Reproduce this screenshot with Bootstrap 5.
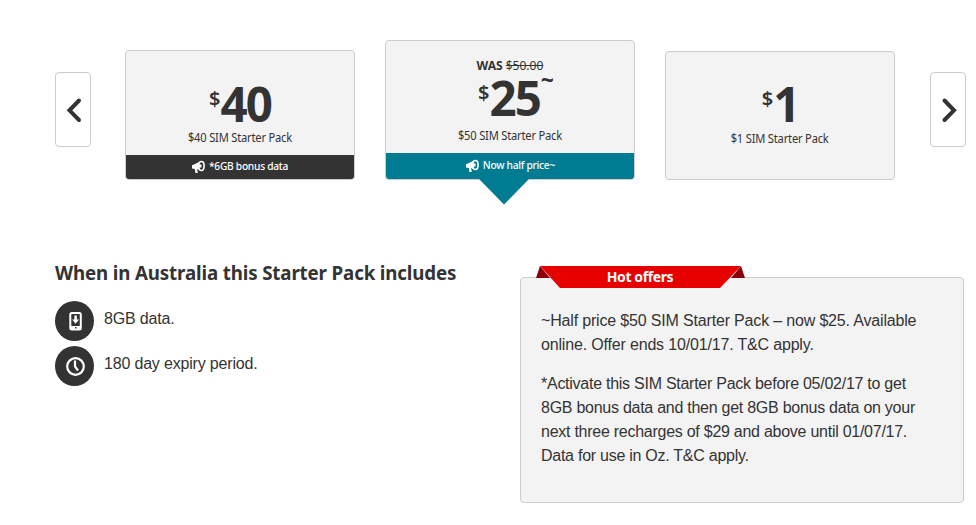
<!DOCTYPE html>
<html lang="en">
<head>
<meta charset="utf-8">
<meta name="viewport" content="width=device-width, initial-scale=1">
<title>SIM Starter Packs</title>
<link href="https://cdn.jsdelivr.net/npm/bootstrap@5.3.0/dist/css/bootstrap.min.css" rel="stylesheet">
<style>
body{font-family:"Liberation Sans",Arial,sans-serif;color:#333;font-size:16px;line-height:24px;overflow:hidden}
.brand{font-family:"Noto Sans","Open Sans",sans-serif}
.packs{padding:40px 10px 0 55px;height:180px}
.arrow-btn{width:36px;height:75px;margin-bottom:33px;border:1px solid #ccc;border-radius:4px;background:#fff;color:#333}
.pack{width:230px;height:130px;margin-left:30px;border:1px solid #ccc;border-radius:4px;background:#f3f3f3}
.pack-first{margin-left:34px}
.pack-current{width:250px;height:140px}
.pack-plain{height:129px;margin-right:35px}
.price{height:42px;line-height:42px;font-size:47.5px;font-weight:700;letter-spacing:-2px;margin-bottom:5px}
.price .unit{font-size:20px;line-height:20px;font-weight:600;letter-spacing:0;margin:6px 0 0}
.price .note{font-size:23px;line-height:20px;letter-spacing:0;margin:-8px -12px 0 1px}
.narrow{display:inline-block;transform:scaleX(.93)}
.pack-name{font-size:12px;line-height:16px;letter-spacing:-.22px}
.pack-first .pack-name{margin-bottom:1px}
.pack-plain .price{margin-bottom:6px}
.pack-plain .pack-name{padding-bottom:8px}
.pack-current .price{margin-bottom:9px}
.pack-current .pack-name{margin-bottom:1px}
.was{font-size:13px;line-height:16px;letter-spacing:-.05px;margin-bottom:4px}
.promo{height:24px;background:#333;color:#fff;font-size:11px;font-weight:500;letter-spacing:-.3px;border-radius:0 0 3px 3px;padding-bottom:2px}
.promo .narrow{margin:0 -3px}
.promo-teal{height:26px;background:#007c92}
.pointer{top:100%;left:93px}
.details{padding:81px 12px 0 55px}
.includes{width:465px}
.includes h2{font-size:20px;line-height:24px;letter-spacing:-.15px}
.includes .narrow{transform:scaleX(.936);transform-origin:left;white-space:nowrap}
.feature{margin-bottom:5px}
.feature-icon{width:39px;height:40px;border-radius:50%;background:#333}
.feature-text{padding:5.500px 0 0 10px;letter-spacing:-.18px}
.offers{width:444px;height:226px;margin-top:16px;border:1px solid #ccc;border-radius:4px;background:#f3f3f3;padding:31px 20px 0}
.offers p{margin-bottom:15px;white-space:nowrap;letter-spacing:-.17px}
.offers p+p{letter-spacing:-.26px}
.ribbon{left:15px;top:-12px;width:210px;height:23px}
.ribbon-text{font-size:14px;line-height:22px;color:#fff;letter-spacing:-.4px;padding-right:2px}
</style>
</head>
<body class="bg-white">
<section class="packs brand d-flex align-items-end">
  <button class="arrow-btn p-0 d-flex align-items-center justify-content-center" aria-label="Previous">
    <svg width="34" height="73" viewBox="0 0 34 73" fill="none" stroke="currentColor" stroke-width="4" stroke-linecap="round"><path d="M23 27.500 13.500 37.300 23 47"/></svg>
  </button>
  <article class="pack pack-first d-flex flex-column text-center">
    <div class="price d-flex justify-content-center mt-auto"><span class="unit">$</span>40</div>
    <div class="pack-name"><span class="narrow">$40 SIM Starter Pack</span></div>
    <div class="promo d-flex align-items-center justify-content-center gap-1 mt-2">
      <svg width="13" height="13" viewBox="0 0 13 13"><path fill="#fff" d="M0 5.200 2 4.500 7 2V10L5 9 5.800 13H3.500L2.800 9 0 8.500Z"/><ellipse cx="9.400" cy="6" rx="2.700" ry="4.500" fill="none" stroke="#fff" stroke-width="1.600"/><path fill="#fff" d="M7 4.500h2.500v3H7z"/></svg>
      <span class="narrow">*6GB bonus data</span>
    </div>
  </article>
  <article class="pack pack-current position-relative d-flex flex-column text-center">
    <div class="was mt-auto"><span class="narrow"><b>WAS</b> <s>$50.00</s></span></div>
    <div class="price d-flex justify-content-center"><span class="unit">$</span>25<span class="note">~</span></div>
    <div class="pack-name"><span class="narrow">$50 SIM Starter Pack</span></div>
    <div class="promo promo-teal d-flex align-items-center justify-content-center gap-1 mt-2">
      <svg width="13" height="13" viewBox="0 0 13 13"><path fill="#fff" d="M0 5.200 2 4.500 7 2V10L5 9 5.800 13H3.500L2.800 9 0 8.500Z"/><ellipse cx="9.400" cy="6" rx="2.700" ry="4.500" fill="none" stroke="#fff" stroke-width="1.600"/><path fill="#fff" d="M7 4.500h2.500v3H7z"/></svg>
      <span class="narrow">Now half price~</span>
    </div>
    <svg class="pointer position-absolute" width="50" height="26" viewBox="0 0 50 26"><path fill="#007c92" d="M0 0H50L25 25.500Z"/></svg>
  </article>
  <article class="pack pack-plain d-flex flex-column text-center">
    <div class="price d-flex justify-content-center mt-auto"><span class="unit">$</span>1</div>
    <div class="pack-name mb-4"><span class="narrow">$1 SIM Starter Pack</span></div>
  </article>
  <button class="arrow-btn p-0 d-flex align-items-center justify-content-center" aria-label="Next">
    <svg width="34" height="73" viewBox="0 0 34 73" fill="none" stroke="currentColor" stroke-width="4" stroke-linecap="round"><path d="M13.500 27.500 23 37.300 13.500 47"/></svg>
  </button>
</section>
<main class="details d-flex align-items-start">
  <section class="includes">
    <h2 class="brand fw-bold mb-3"><span class="narrow">When in Australia this Starter Pack includes</span></h2>
    <div class="d-flex feature">
      <span class="feature-icon d-flex align-items-center justify-content-center">
        <svg width="39" height="40" viewBox="0 0 39 40"><rect x="15.300" y="12" width="10.500" height="16.500" rx="1.500" fill="none" stroke="#fff" stroke-width="2"/><path fill="#fff" d="M15 25h11v3.500H15zM19.400 14.500h2.400v4H24l-3.400 4.200L17.200 18.500h2.200z"/><path fill="#333" d="M20 26h1.500v1.500H20z"/></svg>
      </span>
      <span class="feature-text">8GB data.</span>
    </div>
    <div class="d-flex feature">
      <span class="feature-icon d-flex align-items-center justify-content-center">
        <svg width="39" height="40" viewBox="0 0 39 40" fill="none" stroke="#fff" stroke-width="2.200"><circle cx="20.500" cy="20.500" r="8.300"/><path d="M20 14.500V20.500L23 24.500"/></svg>
      </span>
      <span class="feature-text">180 day expiry period.</span>
    </div>
  </section>
  <aside class="offers position-relative">
    <div class="ribbon position-absolute">
      <svg class="d-block" width="210" height="23" viewBox="0 0 210 23"><path fill="#8b0009" d="M4 0 0 12H14ZM205 0 209 12H195Z"/><path fill="#e60000" d="M4 0H205L184 22H24Z"/></svg>
      <div class="ribbon-text brand fw-bold position-absolute top-0 start-0 w-100 text-center">Hot offers</div>
    </div>
    <p>~Half price $50 SIM Starter Pack – now $25. Available<br>online. Offer ends 10/01/17. T&amp;C apply.</p>
    <p>*Activate this SIM Starter Pack before 05/02/17 to get<br>8GB bonus data and then get 8GB bonus data on your<br>next three recharges of $29 and above until 01/07/17.<br>Data for use in Oz. T&amp;C apply.</p>
  </aside>
</main>
<script src="https://cdn.jsdelivr.net/npm/bootstrap@5.3.0/dist/js/bootstrap.bundle.min.js"></script>
</body>
</html>
